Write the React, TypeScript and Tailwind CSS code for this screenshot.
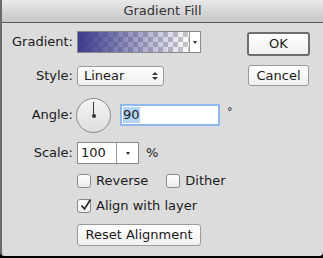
import React from 'react';

const font = { fontFamily: '"Lucida Grande", "DejaVu Sans", sans-serif' };

const Check: React.FC<{ checked?: boolean; label: string }> = ({ checked, label }) => (
  <label className="flex items-center h-[16px] leading-[16px] gap-[5px] text-[13px] text-[#1a1a1a]">
    <span className="relative w-[14px] h-[14px] rounded-[3px] border border-[#8a8a8a] bg-gradient-to-b from-white to-[#ececec] shadow-[inset_0_1px_0_#fff]">
      {checked && (
        <svg viewBox="0 0 14 14" className="absolute -top-[2px] left-[1px] w-[14px] h-[14px]">
          <path d="M2.5 7.5 L5.5 11 L11.5 1.5" fill="none" stroke="#222" strokeWidth="1.6" />
        </svg>
      )}
    </span>
    {label}
  </label>
);

export default function App() {
  return (
    <div className="w-[323px] h-[258px] bg-black overflow-hidden" style={font}>
      <div className="w-[323px] h-[256px] bg-[#dcdcdc] border-l-2 border-[#6b6b6b] rounded-b-[4px] flex flex-col">
        {/* Title bar */}
        <div className="h-[23px] shrink-0 bg-gradient-to-b from-[#e9e9e9] to-[#c6c6c6] border-b border-[#5a5a5a] flex items-center justify-center text-[13px] text-[#333]">
          Gradient Fill
        </div>

        <div className="flex">
          {/* Form */}
          <div className="flex flex-col w-[240px]">
            <div className="flex items-center mt-[8px] h-[22px]">
              <span className="w-[73px] text-right pr-[2px] text-[13px] text-[#1a1a1a]">Gradient:</span>
              <div className="ml-[2px] flex h-[22px] w-[124px] border border-[#8a8a8a] bg-white">
                <div className="relative flex-1 bg-[repeating-conic-gradient(#c8c8c8_0%_25%,#ffffff_0%_50%)] bg-[length:10px_10px]">
                  <div className="absolute inset-0 bg-gradient-to-r from-[#3c3a8c] to-[#3c3a8c00]" />
                </div>
                <div className="w-[11px] border-l border-[#9a9a9a] bg-white flex items-center justify-center">
                  <span className="block w-0 h-0 border-l-[2px] border-r-[2px] border-t-[3px] border-l-transparent border-r-transparent border-t-[#333]" />
                </div>
              </div>
            </div>

            <div className="flex items-center mt-[13px] h-[20px]">
              <span className="w-[73px] text-right pr-[2px] text-[13px] text-[#1a1a1a]">Style:</span>
              <div className="ml-[2px] flex items-center justify-between h-[20px] w-[87px] rounded-[3px] border border-[#9a9a9a] bg-gradient-to-b from-white to-[#f0f0f0] pl-[6px] pr-[5px] text-[13px] text-[#1a1a1a]">
                Linear
                <span className="flex flex-col gap-[2px]">
                  <span className="block w-0 h-0 border-l-[3px] border-r-[3px] border-b-[3px] border-l-transparent border-r-transparent border-b-[#333]" />
                  <span className="block w-0 h-0 border-l-[3px] border-r-[3px] border-t-[3px] border-l-transparent border-r-transparent border-t-[#333]" />
                </span>
              </div>
            </div>

            <div className="flex items-center mt-[11px] h-[36px]">
              <span className="w-[73px] text-right pr-[2px] text-[13px] text-[#1a1a1a]">Angle:</span>
              <div className="ml-[1px] relative w-[35px] h-[35px] rounded-full border border-[#8a8a8a] bg-gradient-to-b from-[#f4f4f4] to-[#dedede]">
                <div className="absolute left-[16px] top-[3px] w-[1px] h-[14px] bg-[#333]" />
                <div className="absolute left-[14.5px] top-[15px] w-[4px] h-[4px] rounded-full bg-[#333]" />
              </div>
              <div className="ml-[9px] h-[22px] w-[100px] border-2 border-[#8fb9ee] bg-white flex items-center pl-[1px]">
                <span className="bg-[#b4d3f7] text-[13px] leading-[16px] text-[#1a1a1a]">90</span>
              </div>
              <span className="ml-[7px] -mt-[6px] text-[11px] text-[#1a1a1a]">°</span>
            </div>

            <div className="flex items-center mt-[9px] h-[22px]">
              <span className="w-[73px] text-right pr-[2px] text-[13px] text-[#1a1a1a]">Scale:</span>
              <div className="ml-[2px] flex h-[22px] w-[62px] border border-[#8a8a8a] bg-white">
                <span className="flex-1 pl-[3px] text-[13px] leading-[20px] text-[#1a1a1a]">100</span>
                <div className="w-[22px] border-l border-[#9a9a9a] flex items-center justify-center">
                  <span className="block w-0 h-0 border-l-[2px] border-r-[2px] border-t-[3px] border-l-transparent border-r-transparent border-t-[#333]" />
                </div>
              </div>
              <span className="ml-[7px] text-[13px] text-[#1a1a1a]">%</span>
            </div>

            <div className="flex items-center mt-[9px] pl-[75px] gap-[18px]">
              <Check label="Reverse" />
              <Check label="Dither" />
            </div>

            <div className="flex items-center mt-[9px] pl-[75px]">
              <Check checked label="Align with layer" />
            </div>

            <div className="mt-[8px] pl-[75px]">
              <button className="h-[22px] w-[124px] rounded-[3px] border border-[#9a9a9a] bg-gradient-to-b from-white to-[#f0f0f0] text-[13px] text-[#1a1a1a]">
                Reset Alignment
              </button>
            </div>
          </div>

          {/* Buttons */}
          <div className="flex flex-col items-start pl-[5px] pt-[9px]">
            <button className="h-[24px] w-[63px] rounded-[3px] border-2 border-[#6e6e6e] bg-gradient-to-b from-white to-[#f0f0f0] text-[13px] text-[#1a1a1a]">
              OK
            </button>
            <button className="mt-[9px] ml-[1px] h-[21px] w-[61px] rounded-[3px] border border-[#9a9a9a] bg-gradient-to-b from-white to-[#f0f0f0] text-[13px] text-[#1a1a1a]">
              Cancel
            </button>
          </div>
        </div>
      </div>
    </div>
  );
}
